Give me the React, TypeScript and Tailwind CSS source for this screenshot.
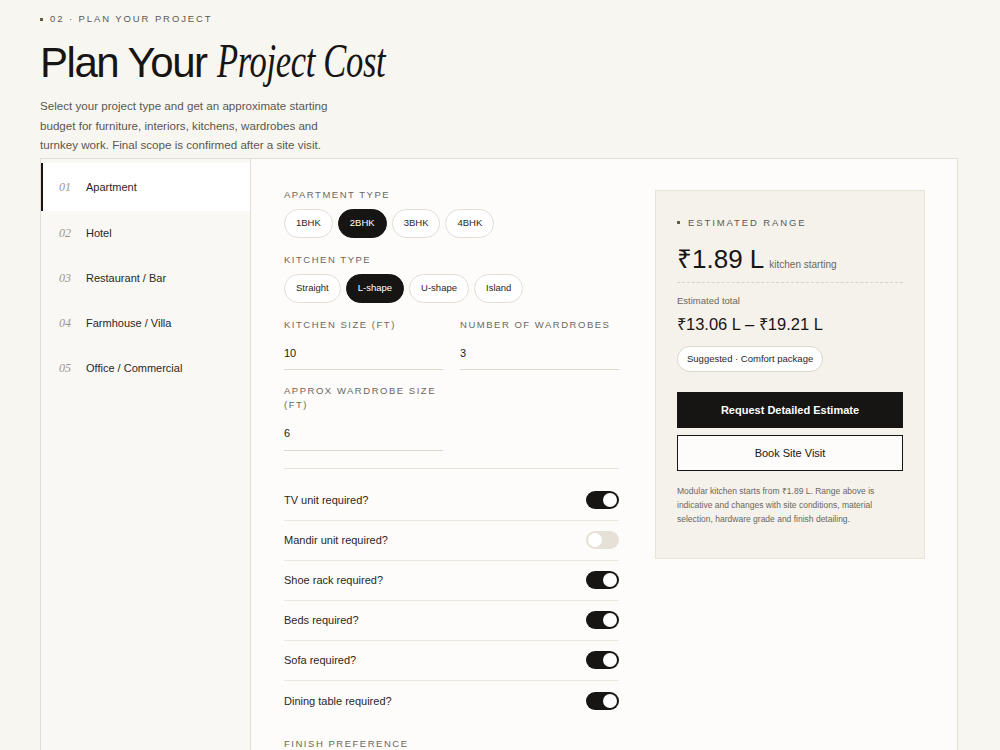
import { useState } from "react";

const projectTypes = ["Apartment", "Hotel", "Restaurant / Bar", "Farmhouse / Villa", "Office / Commercial"];
const apartmentTypes = ["1BHK", "2BHK", "3BHK", "4BHK"];
const kitchenTypes = ["Straight", "L-shape", "U-shape", "Island"];

const extras = [
  { label: "TV unit required?", on: true },
  { label: "Mandir unit required?", on: false },
  { label: "Shoe rack required?", on: true },
  { label: "Beds required?", on: true },
  { label: "Sofa required?", on: true },
  { label: "Dining table required?", on: true },
];

function Label({ children }: { children: React.ReactNode }) {
  return <div className="text-[9.5px] uppercase tracking-[0.16em] text-[#6b6760] leading-[14px]">{children}</div>;
}

function Chip({ text, active }: { text: string; active: boolean }) {
  return (
    <button
      className={`h-[29px] px-[11px] rounded-full border text-[9.5px] ${
        active ? "bg-[#171514] border-[#171514] text-white" : "bg-white border-[#e2ded5] text-[#2a2724]"
      }`}
    >
      {text}
    </button>
  );
}

function Toggle({ on }: { on: boolean }) {
  return (
    <div className={`w-[33px] h-[18px] rounded-full p-[2px] flex ${on ? "bg-[#171514] justify-end" : "bg-[#e6e1d6] justify-start"}`}>
      <div className="w-[14px] h-[14px] rounded-full bg-white" />
    </div>
  );
}

function Field({ label, value }: { label: string; value: string }) {
  return (
    <div className="flex flex-col">
      <Label>{label}</Label>
      <div className="mt-[13px] pb-[8px] border-b border-[#dcd8cf] text-[11px] text-[#1d1b19]">{value}</div>
    </div>
  );
}

export default function App() {
  const [active, setActive] = useState(0);

  return (
    <div className="min-h-[750px] bg-[#f8f6f1] px-10 pt-[12px] font-['Liberation_Sans',Arial,sans-serif] text-[#171514]">
      {/* heading */}
      <div className="flex items-center gap-[7px] text-[9.5px] tracking-[0.2em] text-[#5c5851]">
        <span className="w-[3px] h-[3px] bg-[#6b5a40]" />
        <span>02 · PLAN YOUR PROJECT</span>
      </div>
      <h1 className="mt-[12px] text-[42px] leading-[46px] tracking-[-0.035em] whitespace-nowrap">
        Plan Your{" "}
        <span className="inline-block origin-left scale-x-[0.72] mr-[-64px] font-['Liberation_Serif',serif] italic text-[48px] tracking-[-0.01em]">
          Project Cost
        </span>
      </h1>
      <p className="mt-[10px] w-[300px] text-[11.6px] leading-[19.5px] text-[#5a5650]">
        Select your project type and get an approximate starting budget for furniture, interiors, kitchens, wardrobes and
        turnkey work. Final scope is confirmed after a site visit.
      </p>

      {/* calculator card */}
      <div className="mt-[3px] mr-[2px] border border-[#e3dfd6] bg-[#fdfcfa] flex">
        <aside className="w-[210px] shrink-0 border-r border-[#e3dfd6] bg-[#faf8f4] pt-[4px]">
          {projectTypes.map((p, i) => (
            <button
              key={p}
              onClick={() => setActive(i)}
              className={`w-full flex items-center text-left pl-[16px] border-l-2 ${
                i === active ? "bg-white border-[#171514] h-[48px]" : "border-transparent h-[45px]"
              }`}
            >
              <span className="w-[27px] font-['Liberation_Serif',serif] italic text-[12px] text-[#9a958c]">
                0{i + 1}
              </span>
              <span className="text-[11px] text-[#2a2724]">{p}</span>
            </button>
          ))}
        </aside>

        <div className="flex-1 flex gap-[36px] pl-[33px] pr-[34px] pt-[29px]">
          {/* form */}
          <div className="w-[335px] shrink-0">
            <Label>Apartment Type</Label>
            <div className="mt-[7px] flex gap-[5px]">
              {apartmentTypes.map((t) => (
                <Chip key={t} text={t} active={t === "2BHK"} />
              ))}
            </div>

            <div className="mt-[15px]">
              <Label>Kitchen Type</Label>
            </div>
            <div className="mt-[7px] flex gap-[5px]">
              {kitchenTypes.map((t) => (
                <Chip key={t} text={t} active={t === "L-shape"} />
              ))}
            </div>

            <div className="mt-[15px] grid grid-cols-2 gap-x-[17px] gap-y-[14px]">
              <Field label="Kitchen Size (ft)" value="10" />
              <Field label="Number of Wardrobes" value="3" />
              <Field label="Approx Wardrobe Size (ft)" value="6" />
            </div>

            <div className="mt-[17px] border-t border-[#e6e2da] pt-[12px]">
              {extras.map((e, i) => (
                <div
                  key={e.label}
                  className={`h-[40px] flex items-center justify-between ${i < extras.length - 1 ? "border-b border-[#ebe7df]" : ""}`}
                >
                  <span className="text-[11px] text-[#2a2724]">{e.label}</span>
                  <Toggle on={e.on} />
                </div>
              ))}
            </div>

            <div className="mt-[16px]">
              <Label>Finish Preference</Label>
            </div>
          </div>

          {/* estimate summary */}
          <div className="w-[270px] shrink-0 self-start mt-[2px] border border-[#e8e4da] bg-[#f5f2eb] px-[21px] pt-[25px] pb-[32px]">
            <div className="flex items-center gap-[8px] text-[9.5px] tracking-[0.2em] text-[#5c5851]">
              <span className="w-[3px] h-[3px] bg-[#6b5a40]" />
              <span>ESTIMATED RANGE</span>
            </div>
            <div className="mt-[14px] flex items-baseline gap-[5px] pb-[8px] border-b border-dashed border-[#d8d3c8]">
              <span className="text-[26px] leading-[30px]">₹1.89 L</span>
              <span className="text-[10px] text-[#6b6760]">kitchen starting</span>
            </div>
            <div className="mt-[11px] text-[9.5px] text-[#6b6760]">Estimated total</div>
            <div className="mt-[6px] text-[16.5px] leading-[20px]">₹13.06 L – ₹19.21 L</div>
            <div className="mt-[12px] inline-flex items-center h-[26px] px-[9px] rounded-full border border-[#dcd7cc] bg-white text-[9.5px] text-[#2a2724]">
              Suggested · Comfort package
            </div>
            <button className="mt-[20px] w-full h-[36px] bg-[#171514] text-white text-[11px] font-bold">
              Request Detailed Estimate
            </button>
            <button className="mt-[7px] w-full h-[36px] border border-[#171514] bg-[#fdfcfa] text-[11px] text-[#171514]">
              Book Site Visit
            </button>
            <p className="mt-[13px] text-[8.5px] leading-[14px] text-[#6b6760]">
              Modular kitchen starts from ₹1.89 L. Range above is indicative and changes with site conditions, material
              selection, hardware grade and finish detailing.
            </p>
          </div>
        </div>
      </div>
    </div>
  );
}
